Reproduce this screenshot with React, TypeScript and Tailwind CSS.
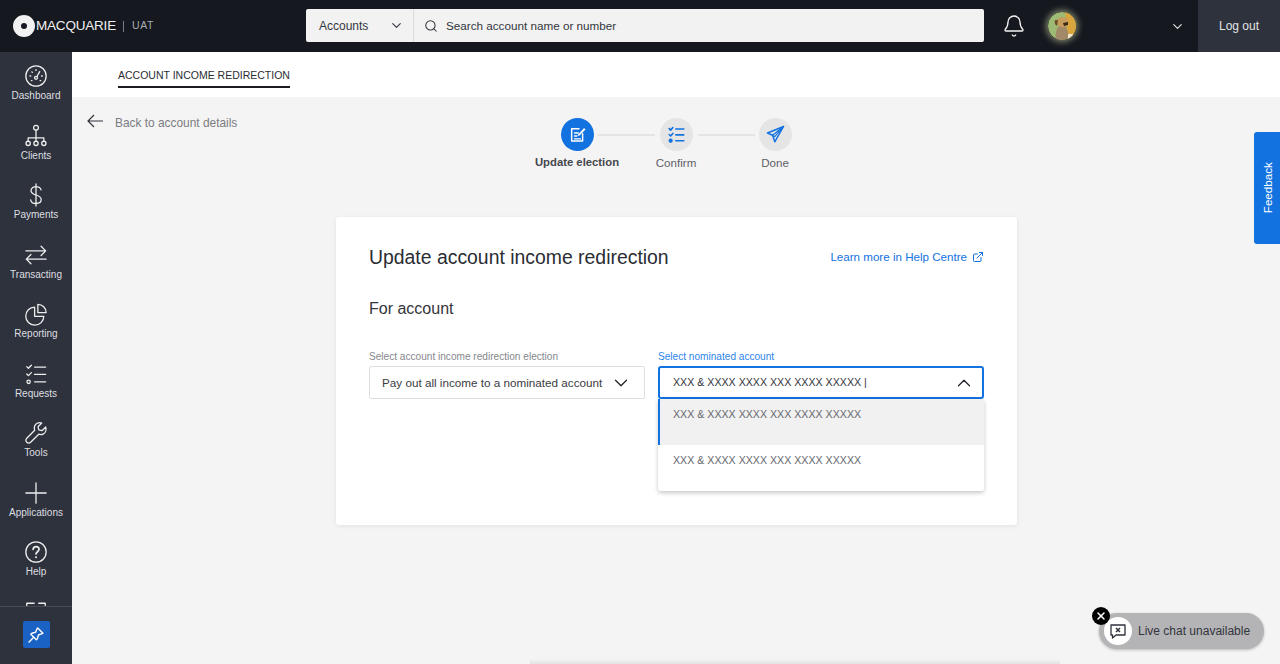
import { ReactNode } from "react";
import { Bell, ChevronDown, ChevronUp, ExternalLink, Search, X } from "lucide-react";

const font = { fontFamily: '"Liberation Sans", Arial, sans-serif' };

const Stroke = ({ children, size = 26, className = "" }: { children: ReactNode; size?: number; className?: string }) => (
  <svg
    width={size}
    height={size}
    viewBox="0 0 26 26"
    fill="none"
    stroke="currentColor"
    strokeWidth="1.4"
    strokeLinecap="round"
    strokeLinejoin="round"
    className={className}
  >
    {children}
  </svg>
);

const navItems: { label: string; icon: ReactNode }[] = [
  {
    label: "Dashboard",
    icon: (
      <>
        <circle cx="13" cy="13" r="11" />
        <circle cx="13" cy="15" r="1.6" />
        <path d="M14 13.6l3-5.400" />
        <path d="M6.500 13h.8M8.500 8.500l.5.5M13 6.200v.8M19 13h.8M8 18h.7M17.400 18h.7" />
      </>
    ),
  },
  {
    label: "Clients",
    icon: (
      <>
        <circle cx="13" cy="4" r="2.600" />
        <path d="M13 6.600V15M4.500 18.500V15h17v3.500M13 15v3.500" />
        <circle cx="4.500" cy="21" r="2.300" />
        <circle cx="13" cy="21" r="2.300" />
        <circle cx="21.500" cy="21" r="2.300" />
      </>
    ),
  },
  {
    label: "Payments",
    icon: <path d="M18.500 7.500c-.6-2.400-2.800-3.600-5.500-3.600-3 0-5.400 1.600-5.400 4.400 0 6 11 3.400 11 9.600 0 2.800-2.500 4.300-5.600 4.300-3 0-5.300-1.400-5.800-4M13 1v24" />,
  },
  {
    label: "Transacting",
    icon: <path d="M2 8.500h21.500M18.500 3.500l5 5-5 5M24 17.500H2.500M7.500 12.500l-5 5 5 5" />,
  },
  {
    label: "Reporting",
    icon: (
      <>
        <path d="M11.500 5.500a9.800 9.800 0 1 0 10 10h-10z" />
        <path d="M15 2.500a9 9 0 0 1 9 9h-9z" />
      </>
    ),
  },
  {
    label: "Requests",
    icon: (
      <>
        <path d="M3 5l1.800 1.800L8 3.500M3 13l1.800 1.800L8 11.500M11.500 5.500h12M11.500 13.500h12M11.500 21.500h12" />
        <circle cx="5" cy="21.500" r="1.800" />
      </>
    ),
  },
  {
    label: "Tools",
    icon: <path d="M23.500 6.500l-4 4-3.500-.8-.8-3.500 4-4c-3-.9-6.400.3-7.600 3-.7 1.600-.6 3.300 0 4.800L3 18.700c-1.300 1.300-1.300 3.200 0 4.300 1.200 1.200 3 1.200 4.200 0l8.800-8.700c1.500.6 3.200.6 4.700-.1 2.800-1.300 3.800-4.700 2.800-7.700z" />,
  },
  {
    label: "Applications",
    icon: <path d="M13 2v22M2 13h22" />,
  },
  {
    label: "Help",
    icon: (
      <>
        <circle cx="13" cy="13" r="11" />
        <path d="M9.800 10.200c.2-1.900 1.600-3 3.300-3 1.800 0 3.200 1.200 3.200 2.900 0 2.600-3.300 2.600-3.300 5.200" strokeWidth="1.800" />
        <path d="M13 18.600v.2" strokeWidth="2.200" />
      </>
    ),
  },
];

const Logo = () => (
  <svg width="22" height="22" viewBox="0 0 22 22" className="shrink-0">
    <circle cx="11" cy="11" r="7" fill="none" stroke="#f2f2f2" strokeWidth="8" />
  </svg>
);

const Avatar = () => (
  <div className="w-[28px] h-[28px] rounded-full shadow-[0_0_6px_2px_rgba(215,220,170,0.55)]">
    <svg width="28" height="28" viewBox="0 0 28 28" className="rounded-full">
      <circle cx="14" cy="14" r="14" fill="#9dbb74" />
      <path d="M17 0h11v28h-8z" fill="#d9a63e" />
      <path d="M8 28c-1-6 0-11 3-14h6c3 3 4 9 3 14z" fill="#a28a68" />
      <path d="M8 9c1-4 9-5 12-2 1 3 0 7-4 8-4 1-7-2-8-6z" fill="#c59c5c" />
      <path d="M7 8l3 0-1 6c-2-1-3-4-2-6z" fill="#6d4f2b" />
      <path d="M15 11l5-1 0 3-4 1z" fill="#3a2a1c" />
      <path d="M20 22h5v6h-5z" fill="#efe6d0" />
    </svg>
  </div>
);

const TopBar = () => (
  <header className="h-[52px] shrink-0 bg-[#15181f] flex items-stretch">
    <div className="w-[306px] shrink-0 flex items-center pl-[13px]">
      <Logo />
      <span className="ml-[1px] text-[13.500px] tracking-[-0.2px] text-[#f0f0f0]">MACQUARIE</span>
      <span className="ml-[7px] h-[11px] w-px bg-[#777b82]" />
      <span className="ml-[8px] text-[10.500px] tracking-[0.6px] text-[#a9acb1]">UAT</span>
    </div>
    <div className="mt-[9px] h-[33px] w-[678px] bg-[#f2f2f2] rounded-[2px] flex items-center text-[#33363d] text-[11.700px]">
      <div className="w-[108px] h-full shrink-0 border-r border-[#dcdcdc] flex items-center justify-between pl-[13px] pr-[9px]">
        <span className="text-[12px]">Accounts</span>
        <ChevronDown size={15} strokeWidth={1.8} />
      </div>
      <Search size={14} strokeWidth={1.8} className="ml-[10px]" />
      <span className="ml-[8px]">Search account name or number</span>
    </div>
    <div className="ml-[18px] flex items-center">
      <Bell size={24} strokeWidth={1.3} className="text-[#f5f5f5]" />
    </div>
    <div className="ml-[22px] flex items-center">
      <Avatar />
    </div>
    <div className="ml-[94px] flex items-center">
      <ChevronDown size={15} strokeWidth={1.8} className="text-[#e8e8e8]" />
    </div>
    <div className="ml-[13px] flex-1 bg-[#2e323c] flex items-center justify-center text-[12px] text-[#e4e4e4]">
      Log out
    </div>
  </header>
);

const SideBar = () => (
  <aside className="w-[72px] shrink-0 bg-[#2e323c] flex flex-col text-[#eeeeee]">
    <nav className="h-[555px] shrink-0 overflow-hidden border-b border-[#454953] pt-[12px]">
      {navItems.map((item) => (
        <div key={item.label} className="h-[59.500px] flex flex-col items-center">
          <Stroke size={24}>{item.icon}</Stroke>
          <span className="mt-px text-[10px] leading-[14px] text-[#dedfe1]">{item.label}</span>
        </div>
      ))}
      {/* next item, cut off by the scroll edge */}
      <div className="flex justify-center">
        <Stroke size={24}>
          <path d="M3 6V3.500h8M16 3.500h7V6" />
        </Stroke>
      </div>
    </nav>
    <div className="flex justify-center pt-[14px]">
      <div className="w-[27px] h-[27px] rounded-[2px] bg-[#1a62c4] flex items-center justify-center text-white">
        <Stroke size={18}>
          <path d="M15.500 3l7.500 7.500-2 .8-4.500 1.700-1.500 5.500-1.500 1.500-8-8 1.500-1.500 5.500-1.500 1.700-4.500z" strokeWidth="2" />
          <path d="M9 17l-6 6" strokeWidth="2" />
        </Stroke>
      </div>
    </div>
  </aside>
);

const Step = ({ label, active, icon }: { label: string; active?: boolean; icon: ReactNode }) => (
  <div className="w-[99px] flex flex-col items-center relative">
    <div
      className={
        active
          ? "w-[33px] h-[33px] rounded-full bg-[#1272e0] text-white flex items-center justify-center"
          : "w-[33px] h-[33px] rounded-full bg-[#e5e5e5] text-[#1272e0] flex items-center justify-center"
      }
    >
      <Stroke size={19}>{icon}</Stroke>
    </div>
    <span
      className={
        active
          ? "mt-[4px] whitespace-nowrap text-[11.300px] leading-[15px] font-bold text-[#45474d]"
          : "mt-[4px] whitespace-nowrap text-[11.600px] leading-[15px] text-[#5f6168]"
      }
    >
      {label}
    </span>
  </div>
);

const Stepper = () => (
  <div className="flex justify-center items-start relative">
    <div className="relative flex">
      <Step
        label="Update election"
        active
        icon={
          <>
            <path d="M20 12v10H5V5h10" strokeWidth="2" />
            <path d="M9 11h5M9 15h3M9 19h8" strokeWidth="2" />
            <path d="M13 14l9-10 2 2-9 9z" fill="currentColor" stroke="none" />
          </>
        }
      />
      <div className="w-[57px] h-[2px] bg-[#e4e4e4] absolute top-[16px] left-[70px]" />
      <Step
        label="Confirm"
        icon={
          <>
            <path d="M3 5l2 2 3-3.500M3 13l2 2 3-3.500M12 5.500h11M12 13.500h11M12 21.500h11" strokeWidth="2.200" />
            <circle cx="5" cy="21.500" r="2.200" fill="currentColor" />
          </>
        }
      />
      <div className="w-[57px] h-[2px] bg-[#e4e4e4] absolute top-[16px] left-[170px]" />
      <Step
        label="Done"
        icon={
          <>
            <path d="M24 2L2 11l7 3 3 9z" strokeWidth="2" />
            <path d="M24 2L9 14l3 2z" strokeWidth="1.600" />
          </>
        }
      />
    </div>
  </div>
);

const AccountDropdown = () => (
  <div className="absolute left-0 right-0 top-[49px] bg-white rounded-b-[3px] shadow-[0_2px_4px_rgba(0,0,0,0.22)] text-[10.650px] text-[#66686e]">
    <div className="h-[46px] bg-[#f1f1f1] border-l-2 border-[#1272e0] pl-[13px] pt-[8px] leading-[14px]">
      XXX &amp; XXXX XXXX XXX XXXX XXXXX
    </div>
    <div className="h-[46px] pl-[15px] pt-[8px] leading-[14px]">XXX &amp; XXXX XXXX XXX XXXX XXXXX</div>
  </div>
);

const Card = () => (
  <section className="w-[681px] h-[308px] bg-white rounded-[3px] shadow-[0_1px_4px_rgba(0,0,0,0.08)] px-[33px] pt-[27px]">
    <div className="flex items-center justify-between">
      <h1 className="text-[19.400px] leading-[26px] text-[#2b2d33]">Update account income redirection</h1>
      <a className="flex items-center gap-[5px] text-[11.600px] text-[#1272e0]">
        Learn more in Help Centre
        <ExternalLink size={12} strokeWidth={2} />
      </a>
    </div>
    <h2 className="mt-[28px] text-[16px] leading-[22px] text-[#33353b]">For account</h2>
    <div className="mt-[30px] flex gap-[13px]">
      <div className="w-[276px]">
        <label className="block text-[10.100px] leading-[13px] text-[#85878c]">
          Select account income redirection election
        </label>
        <div className="mt-[3px] h-[33px] border border-[#dfdfdf] rounded-[2px] flex items-center justify-between pl-[12px] pr-[12px] text-[11.700px] text-[#3a3c42]">
          <span className="whitespace-nowrap">Pay out all income to a nominated account</span>
          <ChevronDown size={22} strokeWidth={1.4} className="shrink-0 text-[#222429]" />
        </div>
      </div>
      <div className="w-[326px] relative">
        <label className="block text-[10.100px] leading-[13px] text-[#2d84ea]">Select nominated account</label>
        <div className="mt-[3px] h-[33px] border-2 border-[#1272e0] rounded-[3px] flex items-center justify-between pl-[13px] pr-[7px] text-[10.650px] text-[#33353b]">
          <span>XXX &amp; XXXX XXXX XXX XXXX XXXXX |</span>
          <ChevronUp size={22} strokeWidth={1.4} className="text-[#222429]" />
        </div>
        <AccountDropdown />
      </div>
    </div>
  </section>
);

const Overlays = () => (
  <>
    <div className="absolute right-0 top-[132px] w-[26px] h-[112px] pl-px bg-[#1272e0] rounded-l-[3px] flex items-center justify-center">
      <span className="-rotate-90 whitespace-nowrap text-[11.600px] text-white">Feedback</span>
    </div>
    <div className="absolute left-[1099px] top-[613px] w-[165px] h-[36px] rounded-full bg-[#b4b4b6] shadow-[0_1px_3px_rgba(0,0,0,0.25)] flex items-center pl-[5px]">
      <div className="w-[28px] h-[28px] rounded-full bg-white flex items-center justify-center text-[#2e323c]">
        <svg width="18" height="18" viewBox="0 0 18 18" fill="none" stroke="currentColor" strokeWidth="1.300" strokeLinejoin="round">
          <path d="M2 3h14v10H7l-3.500 3v-3H2z" />
          <path d="M7 6l4 4M11 6l-4 4" strokeWidth="1.500" />
        </svg>
      </div>
      <span className="ml-[6px] text-[12px] text-[#33353d]">Live chat unavailable</span>
    </div>
    <div className="absolute left-[1092px] top-[607px] w-[18px] h-[18px] rounded-full bg-black flex items-center justify-center text-white">
      <X size={12} strokeWidth={3} />
    </div>
    {/* shadow of the next card peeking in at the fold */}
    <div className="absolute left-[530px] bottom-0 w-[530px] h-[5px] bg-gradient-to-b from-[#f4f4f4] to-[#e2e2e2]" />
  </>
);

const App = () => {
  return (
    <div className="relative w-full h-screen overflow-hidden flex flex-col bg-[#f4f4f4]" style={font}>
      <TopBar />
      <div className="flex flex-1 min-h-0">
        <SideBar />
        <main className="flex-1 min-w-0 flex flex-col">
          <div className="h-[45px] shrink-0 bg-white pl-[46px]">
            <div className="w-fit h-[36px] border-b-2 border-[#1b1d22] pt-[16px] text-[10.500px] leading-[14px] text-[#2b2d33]">
              ACCOUNT INCOME REDIRECTION
            </div>
          </div>
          <div className="relative flex-1 flex flex-col">
            <div className="absolute left-[15px] top-[18px] flex items-center gap-[11px] text-[11.900px] text-[#7a7c82]">
              <svg width="17" height="14" viewBox="0 0 17 14" fill="none" stroke="#33353b" strokeWidth="1.200" className="-mt-[5px]">
                <path d="M16 7H1M7 1L1 7l6 6" />
              </svg>
              <span>Back to account details</span>
            </div>
            <div className="pt-[21px]">
              <Stepper />
            </div>
            <div className="mt-[47px] ml-[264px]">
              <Card />
            </div>
          </div>
        </main>
      </div>
      <Overlays />
    </div>
  );
};

export default App;
